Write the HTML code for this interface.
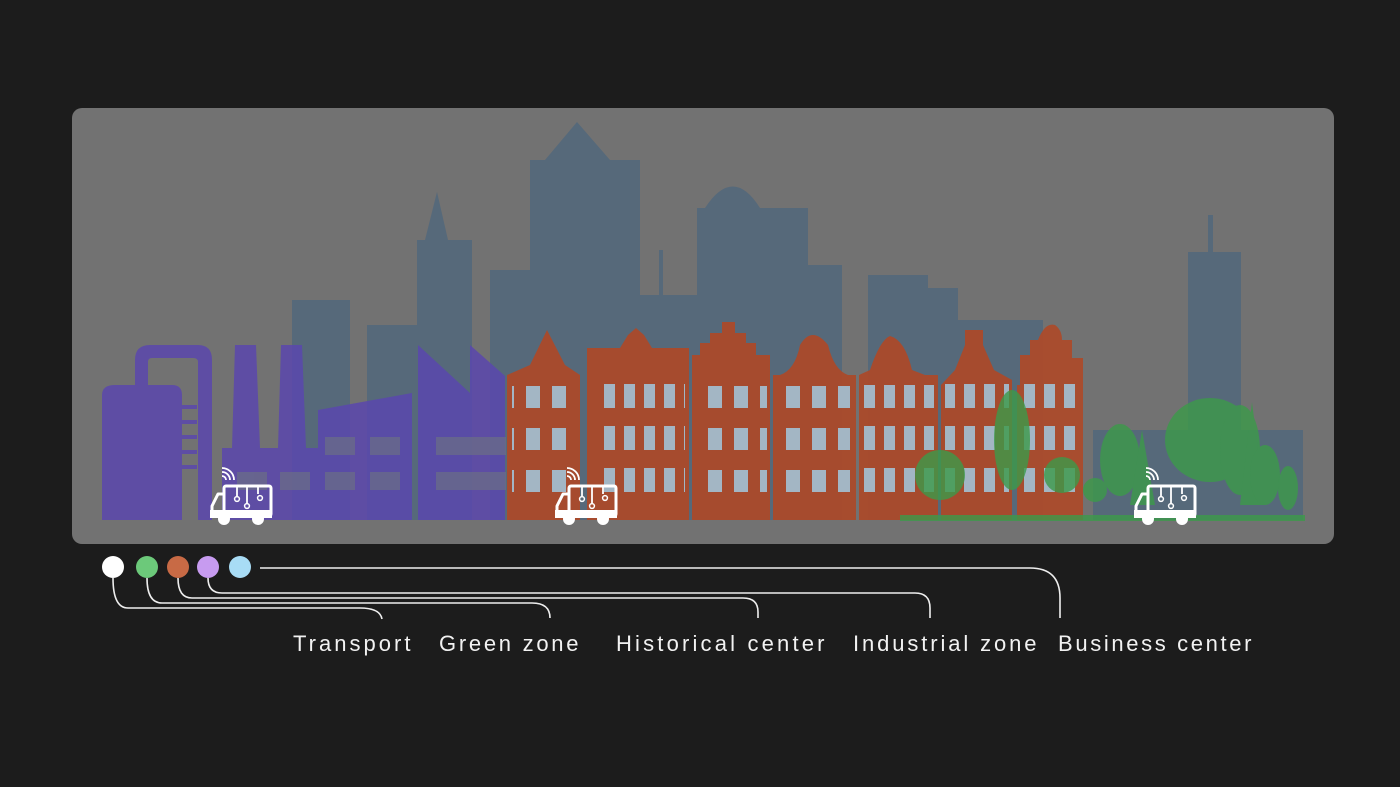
<!DOCTYPE html>
<html><head><meta charset="utf-8"><style>
html,body{margin:0;padding:0;background:#1c1c1c;width:1400px;height:787px;overflow:hidden}
svg{position:absolute;left:0;top:0}
.lbl{font-family:"Liberation Sans",sans-serif;font-size:22px;fill:#f2f2f2;letter-spacing:2.5px}
</style></head><body>
<svg width="1400" height="787" viewBox="0 0 1400 787">
<defs>
<pattern id="win" x="0" y="0" width="20" height="42" patternUnits="userSpaceOnUse">
<rect x="4" y="6" width="11" height="24" fill="#a3b6c4"/>
</pattern>
<pattern id="win2" x="0" y="0" width="26" height="42" patternUnits="userSpaceOnUse">
<rect x="6" y="8" width="14" height="22" fill="#a3b6c4"/>
</pattern>
<g id="truck">
<rect x="12" y="4" width="47" height="30" rx="2" fill="none" stroke="#fff" stroke-width="3"/>
<path d="M12 12 H6 L0 24 V34 H12 Z" fill="none" stroke="#fff" stroke-width="3" stroke-linejoin="round"/>
<rect x="-2" y="28" width="62" height="8" fill="#fff"/>
<circle cx="12" cy="37" r="6" fill="#fff"/><circle cx="46" cy="37" r="6" fill="#fff"/>
<path d="M25 4 V14 M35 4 V22 M46 4 V12" stroke="#fff" stroke-width="1.8"/>
<circle cx="25" cy="17" r="2.4" fill="none" stroke="#fff" stroke-width="1.5"/>
<circle cx="35" cy="24" r="2.4" fill="none" stroke="#fff" stroke-width="1.5"/>
<circle cx="48" cy="16" r="2.4" fill="none" stroke="#fff" stroke-width="1.5"/>
<path d="M10 -6 A4 4 0 0 1 14 -2 M10 -10 A8 8 0 0 1 18 -2 M10 -14 A12 12 0 0 1 22 -2" fill="none" stroke="#fff" stroke-width="1.8"/>
</g>
</defs>
<rect x="72" y="108" width="1262" height="436" rx="10" fill="#727272"/>
<g fill="#56697a">
<rect x="417" y="240" width="55" height="280"/><polygon points="425,240 437,192 448,240"/>
<rect x="490" y="270" width="45" height="250"/>
<rect x="530" y="160" width="110" height="360"/><polygon points="545,160 577,122 610,160"/>
<rect x="640" y="295" width="57" height="225"/><rect x="659" y="250" width="4" height="50"/>
<rect x="697" y="208" width="111" height="312"/><path d="M705 208 Q733 165 760 208Z"/>
<rect x="808" y="265" width="34" height="255"/>
<rect x="868" y="275" width="60" height="245"/><rect x="928" y="288" width="30" height="232"/>
<rect x="958" y="320" width="85" height="200"/>
<rect x="292" y="300" width="58" height="220"/><rect x="367" y="325" width="53" height="195"/>
<rect x="1188" y="252" width="53" height="268"/><rect x="1208" y="215" width="5" height="40"/>
<rect x="1093" y="430" width="210" height="90"/>
</g>
<g fill="#5a46b0" opacity="0.82">
<path d="M102 520 V395 Q102 385 115 385 H172 Q182 385 182 395 V520Z"/>
<path d="M135 385 V360 Q135 345 150 345 H198 Q212 345 212 360 V520 H198 V362 Q198 358 193 358 H152 Q148 358 148 362 V385Z"/>
<rect x="182" y="405" width="15" height="4"/><rect x="182" y="420" width="15" height="4"/><rect x="182" y="435" width="15" height="4"/><rect x="182" y="450" width="15" height="4"/><rect x="182" y="465" width="15" height="4"/>
<polygon points="235,345 256,345 260,448 232,448"/><polygon points="281,345 302,345 306,448 278,448"/>
<polygon points="222,455 318,455 318,410 412,393 412,520 222,520"/>
<polygon points="418,345 470,393 470,345 505,376 505,520 418,520"/>
<rect x="222" y="448" width="100" height="72"/>
</g>
<g fill="#6b6f86" opacity="0.7">
<rect x="237" y="472" width="30" height="18"/><rect x="280" y="472" width="30" height="18"/><rect x="325" y="472" width="30" height="18"/><rect x="370" y="472" width="30" height="18"/>
<rect x="325" y="437" width="30" height="18"/><rect x="370" y="437" width="30" height="18"/>
<rect x="436" y="437" width="70" height="18"/><rect x="436" y="472" width="70" height="18"/>
</g>
<g fill="#a94b2c" opacity="0.97">
<path d="M507 520 V375 L530 365 L547 330 L565 365 L580 375 V520Z"/>
<path d="M587 520 V348 H620 L628 335 L636 328 L644 335 L652 348 H689 V520Z"/>
<path d="M692 520 V355 L700 355 V343 L710 343 V333 L722 333 V322 H735 V333 L746 333 V343 L756 343 V355 L770 355 V520Z"/>
<path d="M773 520 V375 H780 Q795 370 800 345 Q812 325 828 345 Q834 370 848 375 H856 V520Z"/>
<path d="M859 520 V375 L870 370 Q880 340 890 336 Q905 340 912 370 L925 375 L938 375 V520Z"/>
<path d="M941 520 V385 L955 370 L965 345 V330 H983 V345 L994 370 L1012 380 V520Z"/>
<path d="M1017 520 V385 H1020 V355 L1030 355 V340 L1038 340 Q1045 322 1055 325 Q1062 330 1062 340 L1072 340 V358 L1083 358 V520Z"/>
</g>
<g>
<rect x="512" y="380" width="66" height="130" fill="url(#win2)"/>
<rect x="595" y="370" width="90" height="130" fill="url(#win)"/>
<rect x="697" y="385" width="70" height="110" fill="url(#win2)"/>
<rect x="780" y="385" width="70" height="110" fill="url(#win2)"/>
<rect x="862" y="385" width="72" height="125" fill="url(#win)"/>
<rect x="945" y="380" width="64" height="130" fill="url(#win)"/>
<rect x="1022" y="380" width="58" height="130" fill="url(#win)"/>
</g>
<g fill="#3c9a4a" opacity="0.8">
<circle cx="940" cy="475" r="25"/><ellipse cx="1012" cy="440" rx="18" ry="50"/><circle cx="1062" cy="475" r="18"/>
<ellipse cx="1120" cy="460" rx="20" ry="36"/><polygon points="1142,430 1130,505 1155,505"/>
<ellipse cx="1210" cy="440" rx="45" ry="42"/><ellipse cx="1240" cy="450" rx="20" ry="45"/>
<polygon points="1252,402 1240,505 1265,505"/><ellipse cx="1265" cy="475" rx="15" ry="30"/>
<ellipse cx="1288" cy="488" rx="10" ry="22"/><circle cx="1095" cy="490" r="12"/>
<rect x="900" y="515" width="405" height="6"/>
</g>
<use href="#truck" x="212" y="482"/>
<use href="#truck" x="557" y="482"/>
<use href="#truck" x="1136" y="482"/>
<g fill="none" stroke="#eee" stroke-width="1.6">
<path d="M260 568 H1030 Q1060 568 1060 598 V618"/>
<path d="M208 578 Q208 593 222 593 H915 Q930 593 930 608 V618"/>
<path d="M178 578 Q178 598 192 598 H743 Q758 598 758 612 V618"/>
<path d="M147 578 Q147 603 162 603 H532 Q550 603 550 618"/>
<path d="M113 578 Q113 608 128 608 H360 Q380 608 382 619"/>
</g>
<circle cx="113" cy="567" r="11" fill="#fff"/>
<circle cx="147" cy="567" r="11" fill="#6cc97a"/>
<circle cx="178" cy="567" r="11" fill="#c86a45"/>
<circle cx="208" cy="567" r="11" fill="#c79bf0"/>
<circle cx="240" cy="567" r="11" fill="#a8dcf5"/>
<text class="lbl" x="293" y="651" textLength="120">Transport</text>
<text class="lbl" x="439" y="651" textLength="142">Green zone</text>
<text class="lbl" x="616" y="651" textLength="211">Historical center</text>
<text class="lbl" x="853" y="651" textLength="186">Industrial zone</text>
<text class="lbl" x="1058" y="651" textLength="196">Business center</text>
</svg>
</body></html>
